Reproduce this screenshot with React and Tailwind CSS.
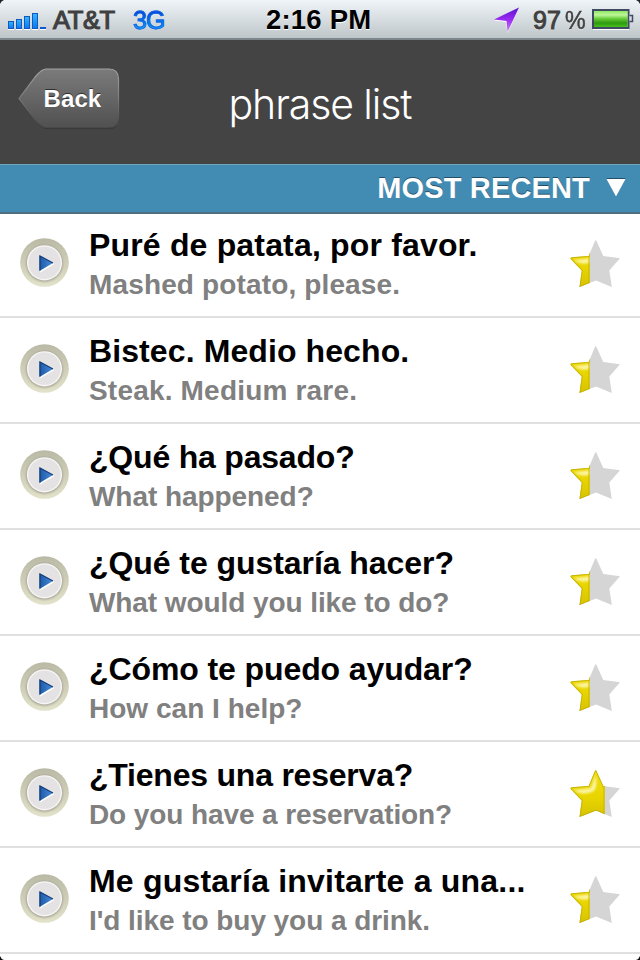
import React from 'react';

const phrases = [
  { es: 'Puré de patata, por favor.', en: 'Mashed potato, please.', fill: 19.7, esGap: 'tracking-[0.17px]', enGap: 'tracking-[0.14px]' },
  { es: 'Bistec. Medio hecho.', en: 'Steak. Medium rare.', fill: 19.7, esGap: 'tracking-[0.1px]', enGap: 'tracking-[0.19px]' },
  { es: '¿Qué ha pasado?', en: 'What happened?', fill: 19.7, esGap: 'tracking-[-0.2px]', enGap: 'tracking-[-0.06px]' },
  { es: '¿Qué te gustaría hacer?', en: 'What would you like to do?', fill: 19.7, esGap: 'tracking-[-0.06px]', enGap: 'tracking-[-0.08px]' },
  { es: '¿Cómo te puedo ayudar?', en: 'How can I help?', fill: 19.7, esGap: 'tracking-[-0.1px]', enGap: 'tracking-[0.02px]' },
  { es: '¿Tienes una reserva?', en: 'Do you have a reservation?', fill: 34.7, esGap: 'tracking-[-0.22px]', enGap: 'tracking-[-0.1px]' },
  { es: 'Me gustaría invitarte a una...', en: "I'd like to buy you a drink.", fill: 19.7, esGap: 'tracking-[0.21px]', enGap: 'tracking-[-0.06px]' },
];

const STAR = 'M26 0 L33.3 16 L50 18.2 L39.3 30.5 L41.8 47 L26 40.5 L9.5 47 L11.8 30.5 L0.5 18.8 Q0.5 17.5 2 17.3 L18.7 16 L24.5 2 Q25.5 0 26 0 Z';

// Shared gradients, filters and clip shapes
function Defs() {
  return (
    <svg width="0" height="0" className="absolute" aria-hidden="true">
      <defs>
        <linearGradient id="ring" x1="0" y1="0" x2="0" y2="1">
          <stop offset="0" stopColor="#b9b9a5" />
          <stop offset="1" stopColor="#e3e2ca" />
        </linearGradient>
        <linearGradient id="play" x1="0" y1="0" x2="1" y2="0">
          <stop offset="0" stopColor="#1c58a5" />
          <stop offset="1" stopColor="#4a8ddb" />
        </linearGradient>
        <linearGradient id="gold" x1="0" y1="0" x2="0" y2="1">
          <stop offset="0" stopColor="#f0dc10" />
          <stop offset="0.55" stopColor="#e9d600" />
          <stop offset="1" stopColor="#d6c200" />
        </linearGradient>
        <linearGradient id="signal" x1="0" y1="0" x2="0" y2="1">
          <stop offset="0" stopColor="#35b6ff" />
          <stop offset="1" stopColor="#0878f2" />
        </linearGradient>
        <linearGradient id="arrow" x1="0" y1="0" x2="0" y2="1">
          <stop offset="0" stopColor="#5a10d0" />
          <stop offset="0.5" stopColor="#9a2cf0" />
          <stop offset="1" stopColor="#c884f5" />
        </linearGradient>
        <linearGradient id="charge" x1="0" y1="0" x2="0" y2="1">
          <stop offset="0" stopColor="#8fe860" />
          <stop offset="0.25" stopColor="#bdf79a" />
          <stop offset="0.5" stopColor="#62c832" />
          <stop offset="0.75" stopColor="#2f9a10" />
          <stop offset="1" stopColor="#45c01d" />
        </linearGradient>
        <linearGradient id="button" x1="0" y1="0" x2="0" y2="1">
          <stop offset="0" stopColor="#7b7b7b" />
          <stop offset="1" stopColor="#505050" />
        </linearGradient>
        <linearGradient id="buttonEdge" x1="0" y1="0" x2="0" y2="1">
          <stop offset="0" stopColor="#a3a3a3" />
          <stop offset="0.45" stopColor="#808080" />
          <stop offset="1" stopColor="#424242" />
        </linearGradient>
        <filter id="soft" x="-30%" y="-30%" width="160%" height="160%">
          <feGaussianBlur stdDeviation="1.2" />
        </filter>
        <clipPath id="starShape">
          <path d={STAR} />
        </clipPath>
      </defs>
    </svg>
  );
}

function StatusBar() {
  return (
    <div className="flex h-10 items-start border-b-2 border-b-[#7d868a] bg-linear-to-b from-[#eff5f8] to-[#bfc6c9]">
      <svg width="40" height="32" viewBox="0 0 40 32" className="ml-2 shrink-0">
        <g fill="#fff">
          <path d="M0 28h6v2h-6zM8 28h6v2h-6zM16 28h6v2h-6zM24 28h6v2h-6zM32 28h6v2h-6z" />
        </g>
        <g fill="url(#signal)" stroke="#1159bd" strokeWidth="1">
          <rect x="0.5" y="21.5" width="5" height="7" />
          <rect x="8.5" y="19.5" width="5" height="9" />
          <rect x="16.5" y="16.5" width="5" height="12" />
          <rect x="24.5" y="13.5" width="5" height="15" />
        </g>
        <rect x="32" y="27" width="6" height="2" fill="#0f58cf" />
      </svg>
      <span className="ml-[5px] w-[80px] text-[25.5px] leading-10 tracking-[-0.4px] text-[#404040] [text-shadow:0_1px_0_#fff] [-webkit-text-stroke:1.2px_#404040]">AT&amp;T</span>
      <span className="w-[133px] bg-linear-to-b from-[#0a2fd2] from-25% to-[#20a5fb] to-75% bg-clip-text text-[25px] leading-10 tracking-[-1px] text-transparent [-webkit-text-stroke:0.8px_#1266e4]">3G</span>
      <span className="w-[228px] text-[27.5px] font-bold leading-10 tracking-[0.2px] text-black [text-shadow:0_1px_0_#fff]">2:16 PM</span>
      <svg width="27" height="34" viewBox="0 0 27 34" className="shrink-0">
        <path d="M0 20.5L25 8.5L13.5 33L12 22Z" fill="#fff" />
        <path d="M0 19.5L25 7.5L13.5 32L12.5 21Z" fill="url(#arrow)" />
      </svg>
      <span className="ml-[12px] w-[59px] whitespace-nowrap text-[25px] leading-10 text-[#404040] [text-shadow:0_1px_0_#fff] [-webkit-text-stroke:1px_#404040]">97<span className="ml-[4px] inline-block origin-left scale-x-[0.93] [-webkit-text-stroke:0.5px_#404040]">%</span></span>
      <svg width="43" height="32" viewBox="0 0 43 32" className="shrink-0">
        <rect x="1" y="29" width="36" height="1" fill="#fff" />
        <rect x="1" y="10" width="35.5" height="18" fill="#e5eee5" stroke="#3f4962" strokeWidth="2" />
        <rect x="2" y="11" width="33.5" height="16" fill="url(#charge)" />
        <path d="M37.5 15.5h3v6h-3" fill="#d5dce0" stroke="#3f4962" strokeWidth="1.5" />
      </svg>
    </div>
  );
}

function BackButton() {
  return (
    <div className="grid h-[62px] w-[102px]">
      <svg width="102" height="62" viewBox="0 0 102 62" className="col-start-1 row-start-1">
        <path d="M1 31.5 L18 9 Q24 2 28 2 H91 Q100.5 2 100.5 12 V51 Q100.5 61 91 61 H28 Q24 61 18 54 Z" fill="#303030" />
        <path d="M1 30.5 L18 8 Q24 1 28 1 H91 Q100.5 1 100.5 11 V50 Q100.5 60 91 60 H28 Q24 60 18 53 Z" fill="url(#button)" stroke="url(#buttonEdge)" strokeWidth="1.2" />
      </svg>
      <span className="col-start-1 row-start-1 self-center pb-[1px] pl-[25.5px] text-2xl font-bold tracking-[0.1px] text-white [text-shadow:0_-1px_0_#303030]">Back</span>
    </div>
  );
}

function PlayIcon() {
  return (
    <svg width="50" height="50" viewBox="0 0 50 50" className="shrink-0">
      <circle cx="24.5" cy="24.5" r="24.3" fill="url(#ring)" />
      <circle cx="24.5" cy="25.5" r="18.2" fill="#77776b" opacity="0.55" filter="url(#soft)" />
      <circle cx="24.5" cy="24.8" r="17.6" fill="#f7f5f5" />
      <circle cx="24.5" cy="24.8" r="16.2" fill="#e5e2e4" />
      <path d="M20 18.5L34.5 26L20 34.5Z" fill="#fff" />
      <path d="M19.5 17.5L33 25L19.5 33Z" fill="url(#play)" />
      <path d="M20 32.5V18L33 25" fill="none" stroke="#153d78" strokeWidth="1.2" />
    </svg>
  );
}

function Star({ fill }) {
  return (
    <svg width="50" height="48" viewBox="0 0 50 48" className="shrink-0">
      <path d={STAR} fill="#d5d5d5" />
      <svg width={fill} height="48">
        <g clipPath="url(#starShape)">
          <rect width="50" height="48" fill="url(#gold)" />
          <path d="M4 20 Q15 19 21 18 L25.5 5 Q28 16 24 21 Q13 27 4 20Z" fill="#fff9b8" opacity="0.85" filter="url(#soft)" />
          <path d={STAR} fill="none" stroke="#bda800" strokeOpacity="0.75" strokeWidth="1.8" />
          <path d={`M${fill - 0.6} 0V48`} stroke="#c9b500" strokeWidth="1.2" />
        </g>
      </svg>
    </svg>
  );
}

function PhraseRow({ es, en, fill, esGap, enGap }) {
  return (
    <li className="flex h-[106px] items-start border-b-2 border-[#e0e0e0] bg-white pl-5 pr-5">
      <div className="pt-[26px]"><PlayIcon /></div>
      <div className="min-w-0 flex-1 whitespace-nowrap pl-[19px] pt-[15px] font-bold">
        <p className={`text-[32px] leading-[37px] text-black ${esGap}`}>{es}</p>
        <p className={`mt-[5px] text-[28px] leading-8 text-[#808080] ${enGap}`}>{en}</p>
      </div>
      <div className="pt-[28px]"><Star fill={fill} /></div>
    </li>
  );
}

export default function App() {
  return (
    <div className="relative h-[960px] w-[640px] overflow-hidden bg-white font-['Liberation_Sans',Arial,sans-serif]">
      <Defs />
      <StatusBar />
      <header className="grid h-[124px] grid-cols-[1fr_auto_1fr] items-start bg-[#444] pl-[18px] pr-[18px]">
        <div className="pt-7"><BackButton /></div>
        <h1 className="pt-[38px] font-[Inter,sans-serif] text-[41px] font-light leading-[52px] tracking-[-1.1px] text-white">phrase list</h1>
      </header>
      <div className="relative flex h-[50px] items-center justify-end border-b-2 border-t border-b-[#4f6f80] border-t-[#72a5be] bg-[#428cb4] pr-[14px]">
        <span className="text-[29px] font-bold leading-none tracking-[0.15px] text-white [text-shadow:0_-1px_0_#244f68]">MOST RECENT</span>
        <svg width="20" height="20" viewBox="0 0 20 20" className="mb-0.5 ml-4">
          <path d="M0.5 0h19L10 17.5Z" fill="#244f68" />
          <path d="M0.5 1h19L10 18.5Z" fill="#fff" />
        </svg>
      </div>
      <ul className="-mt-0.5">
        {phrases.map((p) => <PhraseRow key={p.es} {...p} />)}
      </ul>
      <svg width="6" height="6" className="absolute left-0 top-0"><path d="M0 0h4Q1 1 0 4Z" fill="#222" /></svg>
      <svg width="6" height="6" className="absolute right-0 top-0"><path d="M6 0H2Q5 1 6 4Z" fill="#222" /></svg>
      <svg width="6" height="6" className="absolute bottom-0 left-0"><path d="M0 6h4Q1 5 0 2Z" fill="#111" /></svg>
      <svg width="6" height="6" className="absolute bottom-0 right-0"><path d="M6 6H2Q5 5 6 2Z" fill="#111" /></svg>
    </div>
  );
}
